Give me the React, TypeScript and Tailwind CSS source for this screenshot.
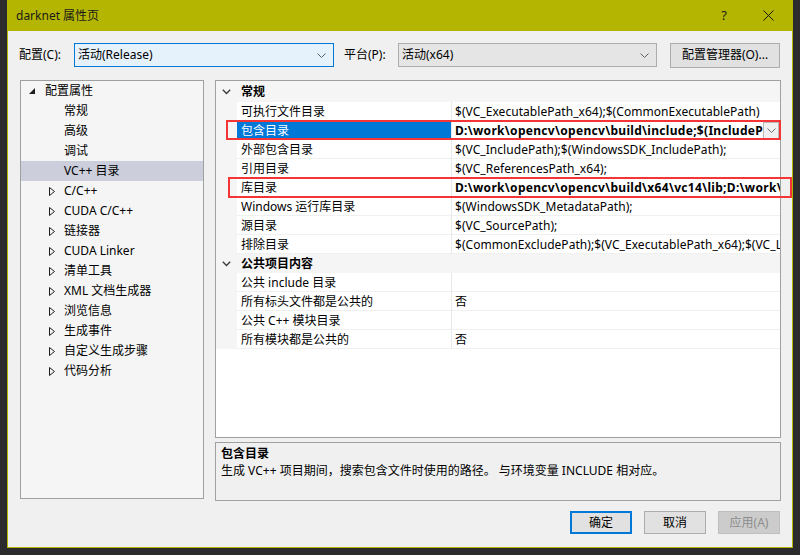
import React from "react";

const FONT = { fontFamily: '"Noto Sans", "Noto Sans CJK SC", sans-serif' };

function Chevron({ color = "#606060" }: { color?: string }) {
  return (
    <svg width="9" height="5" viewBox="0 0 9 5" className="block">
      <path d="M0.5 0.5 L4.5 4.5 L8.5 0.5" fill="none" stroke={color} strokeWidth="1" />
    </svg>
  );
}

function GridChevron() {
  return (
    <svg width="9" height="6" viewBox="0 0 9 6" className="block">
      <path d="M0.8 0.8 L4.5 4.5 L8.2 0.8" fill="none" stroke="#3c3c3c" strokeWidth="1.4" />
    </svg>
  );
}

function TriFilled() {
  return (
    <svg width="7" height="7" viewBox="0 0 7 7" className="block">
      <polygon points="6,0 6,6 0,6" fill="#1e1e1e" />
    </svg>
  );
}

function TriOutline() {
  return (
    <svg width="6" height="9" viewBox="0 0 6 9" className="block">
      <polygon points="0.5,0.5 5.5,4.5 0.5,8.5" fill="none" stroke="#1e1e1e" strokeWidth="1" />
    </svg>
  );
}

type TreeItem = { label: string; kind: "root" | "leaf" | "collapsed"; selected?: boolean };

const tree: TreeItem[] = [
  { label: "配置属性", kind: "root" },
  { label: "常规", kind: "leaf" },
  { label: "高级", kind: "leaf" },
  { label: "调试", kind: "leaf" },
  { label: "VC++ 目录", kind: "leaf", selected: true },
  { label: "C/C++", kind: "collapsed" },
  { label: "CUDA C/C++", kind: "collapsed" },
  { label: "链接器", kind: "collapsed" },
  { label: "CUDA Linker", kind: "collapsed" },
  { label: "清单工具", kind: "collapsed" },
  { label: "XML 文档生成器", kind: "collapsed" },
  { label: "浏览信息", kind: "collapsed" },
  { label: "生成事件", kind: "collapsed" },
  { label: "自定义生成步骤", kind: "collapsed" },
  { label: "代码分析", kind: "collapsed" },
];

type Row =
  | { type: "header"; label: string; h: string }
  | { type: "row"; name: string; value: string; bold?: boolean; selected?: boolean };

const rows: Row[] = [
  { type: "header", label: "常规", h: "h-[21px]" },
  { type: "row", name: "可执行文件目录", value: "$(VC_ExecutablePath_x64);$(CommonExecutablePath)" },
  { type: "row", name: "包含目录", value: "D:\\work\\opencv\\opencv\\build\\include;$(IncludePath)", bold: true, selected: true },
  { type: "row", name: "外部包含目录", value: "$(VC_IncludePath);$(WindowsSDK_IncludePath);" },
  { type: "row", name: "引用目录", value: "$(VC_ReferencesPath_x64);" },
  { type: "row", name: "库目录", value: "D:\\work\\opencv\\opencv\\build\\x64\\vc14\\lib;D:\\work\\darknet\\lib;$(LibraryPath)", bold: true },
  { type: "row", name: "Windows 运行库目录", value: "$(WindowsSDK_MetadataPath);" },
  { type: "row", name: "源目录", value: "$(VC_SourcePath);" },
  { type: "row", name: "排除目录", value: "$(CommonExcludePath);$(VC_ExecutablePath_x64);$(VC_LibraryPath_x64)" },
  { type: "header", label: "公共项目内容", h: "h-[19px]" },
  { type: "row", name: "公共 include 目录", value: "" },
  { type: "row", name: "所有标头文件都是公共的", value: "否" },
  { type: "row", name: "公共 C++ 模块目录", value: "" },
  { type: "row", name: "所有模块都是公共的", value: "否" },
];

export default function App() {
  return (
    <div className="relative w-[800px] h-[555px] bg-[#2b2b2e] overflow-hidden text-[12px] text-black" style={FONT}>
      <div className="ml-[7px] w-[786px] h-[548px] bg-[#f0f0f0] border-x border-b border-[#b4b500] flex flex-col">
        {/* title bar */}
        <div className="h-[31px] bg-[#b4b500] flex items-center pl-[8px] shrink-0">
          <span className="text-[12px] text-[#1a1a1a]">darknet 属性页</span>
          <div className="flex-1" />
          <span className="text-[13px] text-[#1a1a1a] mr-[36px]">?</span>
          <svg width="11" height="11" viewBox="0 0 11 11" className="mr-[18px]">
            <path d="M0.5 0.5 L10.5 10.5 M10.5 0.5 L0.5 10.5" stroke="#1a1a1a" strokeWidth="1" />
          </svg>
        </div>

        {/* config row */}
        <div className="mt-[12px] h-[24px] flex items-center pl-[11px] shrink-0">
          <span className="w-[55px]">配置(C):</span>
          <div className="w-[260px] h-[24px] border border-[#0078d7] bg-[#e5f1fb] flex items-center pl-[3px] pr-[7px]">
            <span className="flex-1">活动(Release)</span>
            <Chevron />
          </div>
          <span className="ml-[10px] w-[54px]">平台(P):</span>
          <div className="w-[259px] h-[24px] border border-[#adadad] bg-[#e5e5e5] flex items-center pl-[3px] pr-[7px]">
            <span className="flex-1">活动(x64)</span>
            <Chevron />
          </div>
          <div className="ml-[13px] w-[110px] h-[25px] border border-[#adadad] bg-[#e1e1e1] flex items-center justify-center">
            配置管理器(O)...
          </div>
        </div>

        {/* main area */}
        <div className="mt-[13px] flex pl-[12px] shrink-0">
          {/* tree */}
          <div className="w-[184px] h-[419px] border border-[#a0a0a0] bg-[#f5f5f5]">
            {tree.map((t, i) => (
              <div
                key={i}
                className={`h-[20px] flex items-center ${t.selected ? "bg-[#cccedb]" : ""} ${
                  t.kind === "root" ? "pl-[8px]" : t.kind === "collapsed" ? "pl-[28px]" : "pl-[43px]"
                }`}
              >
                {t.kind === "root" && (
                  <span className="w-[16px] flex items-center">
                    <TriFilled />
                  </span>
                )}
                {t.kind === "collapsed" && (
                  <span className="w-[15px] flex items-center">
                    <TriOutline />
                  </span>
                )}
                <span className="whitespace-nowrap">{t.label}</span>
              </div>
            ))}
          </div>

          {/* right column */}
          <div className="ml-[11px] w-[566px] flex flex-col gap-[4px]">
            <div className="h-[358px] border border-[#a0a0a0] bg-white overflow-hidden">
              {rows.map((r, i) =>
                r.type === "header" ? (
                  <div key={i} className={`${r.h} flex items-center bg-[#f5f5f5] pt-[1px]`}>
                    <span className="w-[21px] flex justify-center">
                      <GridChevron />
                    </span>
                    <span className="pl-[4px] font-bold">{r.label}</span>
                  </div>
                ) : (
                  <div key={i} className="h-[19px] flex">
                    <div className="w-[21px] bg-[#f5f5f5]" />
                    <div
                      className={`w-[214px] flex items-center pl-[4px] pt-[1px] whitespace-nowrap overflow-hidden ${
                        r.selected ? "bg-[#0078d7] text-white" : "border-b border-[#f0f0f0]"
                      }`}
                    >
                      {r.name}
                    </div>
                    <div className="w-px bg-[#e8e8e8]" />
                    <div className="flex-1 min-w-0 flex items-center border-b border-[#f0f0f0] pt-[1px]">
                      <span
                        className={`flex-1 min-w-0 pl-[3px] whitespace-nowrap overflow-hidden ${
                          r.bold ? "font-bold tracking-[0.3px]" : "tracking-[0.05px]"
                        }`}
                      >
                        {r.value}
                      </span>
                      {r.selected && (
                        <div className="w-[16px] h-[17px] border border-[#b8b8b8] bg-[#f0f0f0] flex items-center justify-center mr-[1px]">
                          <Chevron color="#707070" />
                        </div>
                      )}
                    </div>
                  </div>
                )
              )}
            </div>
            <div className="h-[59px] border border-[#a0a0a0] bg-[#f0f0f0] pt-[2px] px-[5px] leading-[17px]">
              <div className="font-bold">包含目录</div>
              <div>生成 VC++ 项目期间，搜索包含文件时使用的路径。 与环境变量 INCLUDE 相对应。</div>
            </div>
          </div>
        </div>

        {/* buttons */}
        <div className="mt-[10px] flex justify-end pr-[12px] gap-[12px] shrink-0">
          <div className="w-[62px] h-[23px] border-2 border-[#0078d7] bg-[#e1e1e1] flex items-center justify-center">
            确定
          </div>
          <div className="w-[62px] h-[23px] border border-[#adadad] bg-[#e1e1e1] flex items-center justify-center">
            取消
          </div>
          <div className="w-[62px] h-[23px] border border-[#bfbfbf] bg-[#cccccc] text-[#8d8d8d] flex items-center justify-center">
            应用(A)
          </div>
        </div>
      </div>

      {/* red highlight boxes */}
      <div className="absolute left-[226px] top-[120px] w-[555px] h-[20px] border-2 border-[#f53535] pointer-events-none" />
      <div className="absolute left-[228px] top-[177px] w-[564px] h-[21px] border-2 border-[#f53535] pointer-events-none" />
    </div>
  );
}
